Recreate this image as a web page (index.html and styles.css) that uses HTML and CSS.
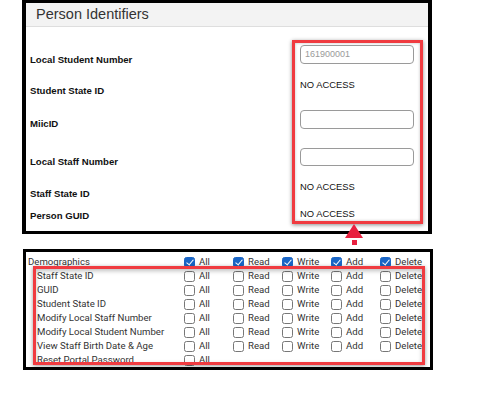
FILE: index.html
```html
<!DOCTYPE html>
<html lang="en">
<head>
<meta charset="utf-8">
<title>Person Identifiers</title>
<link rel="stylesheet" href="styles.css">
</head>
<body>
<div class="page">
  <section class="panel panel-top">
    <div class="panel-head">Person Identifiers</div>
    <div class="panel-body">
      <div class="labels">
        <div class="label g1">Local Student Number</div>
        <div class="label g2">Student State ID</div>
        <div class="label g3">MiicID</div>
        <div class="label g4">Local Staff Number</div>
        <div class="label g5">Staff State ID</div>
        <div class="label g6">Person GUID</div>
      </div>
      <div class="values">
        <div class="field v1"><span class="field-text">161900001</span></div>
        <div class="na v2">NO ACCESS</div>
        <div class="field v3"></div>
        <div class="field v4"></div>
        <div class="na v5">NO ACCESS</div>
        <div class="na v6">NO ACCESS</div>
      </div>
    </div>
  </section>

  <svg class="arrow" width="20" height="24" viewBox="0 0 20 24" aria-hidden="true">
    <polygon points="9,0 18,14 0,14" fill="#e8203f"/>
    <rect x="7" y="16" width="5" height="5" fill="#e8203f"/>
  </svg>

  <section class="panel panel-bottom">
    <div class="row row-head">
      <span class="name">Demographics</span>
      <label class="opt"><span class="cb on"></span>All</label>
      <label class="opt"><span class="cb on"></span>Read</label>
      <label class="opt"><span class="cb on"></span>Write</label>
      <label class="opt"><span class="cb on"></span>Add</label>
      <label class="opt"><span class="cb on"></span>Delete</label>
    </div>
    <div class="row sub">
      <span class="name">Staff State ID</span>
      <label class="opt"><span class="cb"></span>All</label>
      <label class="opt"><span class="cb"></span>Read</label>
      <label class="opt"><span class="cb"></span>Write</label>
      <label class="opt"><span class="cb"></span>Add</label>
      <label class="opt"><span class="cb"></span>Delete</label>
    </div>
    <div class="row sub">
      <span class="name">GUID</span>
      <label class="opt"><span class="cb"></span>All</label>
      <label class="opt"><span class="cb"></span>Read</label>
      <label class="opt"><span class="cb"></span>Write</label>
      <label class="opt"><span class="cb"></span>Add</label>
      <label class="opt"><span class="cb"></span>Delete</label>
    </div>
    <div class="row sub">
      <span class="name">Student State ID</span>
      <label class="opt"><span class="cb"></span>All</label>
      <label class="opt"><span class="cb"></span>Read</label>
      <label class="opt"><span class="cb"></span>Write</label>
      <label class="opt"><span class="cb"></span>Add</label>
      <label class="opt"><span class="cb"></span>Delete</label>
    </div>
    <div class="row sub">
      <span class="name">Modify Local Staff Number</span>
      <label class="opt"><span class="cb"></span>All</label>
      <label class="opt"><span class="cb"></span>Read</label>
      <label class="opt"><span class="cb"></span>Write</label>
      <label class="opt"><span class="cb"></span>Add</label>
      <label class="opt"><span class="cb"></span>Delete</label>
    </div>
    <div class="row sub">
      <span class="name">Modify Local Student Number</span>
      <label class="opt"><span class="cb"></span>All</label>
      <label class="opt"><span class="cb"></span>Read</label>
      <label class="opt"><span class="cb"></span>Write</label>
      <label class="opt"><span class="cb"></span>Add</label>
      <label class="opt"><span class="cb"></span>Delete</label>
    </div>
    <div class="row sub">
      <span class="name">View Staff Birth Date &amp; Age</span>
      <label class="opt"><span class="cb"></span>All</label>
      <label class="opt"><span class="cb"></span>Read</label>
      <label class="opt"><span class="cb"></span>Write</label>
      <label class="opt"><span class="cb"></span>Add</label>
      <label class="opt"><span class="cb"></span>Delete</label>
    </div>
    <div class="row sub">
      <span class="name">Reset Portal Password</span>
      <label class="opt"><span class="cb"></span>All</label>
    </div>
    <div class="highlight"></div>
  </section>
</div>
</body>
</html>
```

FILE: styles.css
```css
* { box-sizing: border-box; }

html, body {
  margin: 0;
  padding: 0;
  background: #fff;
}

.page {
  position: relative;
  width: 481px;
  height: 401px;
  overflow: hidden;
}

.panel {
  border: solid #000;
  background: #fff;
}

/* ---------- top panel ---------- */
.panel-top {
  margin-left: 22px;
  width: 410px;
  height: 234px;
  border-width: 3px 4px 3px 4px;
  display: flex;
  flex-direction: column;
}

.panel-head {
  height: 24px;
  background: #f3f3f3;
  border-bottom: 1px solid #dedede;
  padding-left: 10px;
  font-family: "Liberation Sans", Arial, sans-serif;
  font-size: 14.5px;
  line-height: 23px;
  color: #333;
}

.panel-body {
  flex: 1;
  display: flex;
  align-items: flex-start;
}

.labels {
  flex: 1;
  padding-left: 4px;
  padding-top: 26px;
  display: flex;
  flex-direction: column;
}

.label {
  font-family: "Liberation Sans", Arial, sans-serif;
  font-weight: bold;
  font-size: 9.6px;
  line-height: 14px;
  color: #111;
}
.g2 { margin-top: 17px; }
.g3 { margin-top: 19px; }
.g4 { margin-top: 24px; }
.g5 { margin-top: 18px; }
.g6 { margin-top: 8px; }

.values {
  width: 131px;
  height: 184px;
  margin-top: 13px;
  margin-right: 5px;
  border: 3px solid #f03b40;
  padding-left: 5px;
  display: flex;
  flex-direction: column;
  box-shadow: 0 1px 4px rgba(0,0,0,0.45), inset 0 0 3px rgba(0,0,0,0.25);
}

.field {
  width: 114px;
  height: 19px;
  border: 1px solid #9a9a9a;
  border-radius: 4px;
  background: #fff;
  padding-left: 4px;
  font-family: "Liberation Sans", Arial, sans-serif;
  font-size: 9px;
  line-height: 17px;
  color: #9a9a9a;
}

.na {
  font-family: "Liberation Sans", Arial, sans-serif;
  font-size: 9.4px;
  line-height: 14px;
  color: #111;
}

.v1 { margin-top: 2px; }
.v2 { margin-top: 14px; }
.v3 { margin-top: 18px; }
.v4 { margin-top: 19px; }
.v5 { margin-top: 14px; }
.v6 { margin-top: 13px; }

/* ---------- arrow annotation ---------- */
.arrow {
  position: absolute;
  left: 345px;
  top: 224px;
}

/* ---------- bottom panel ---------- */
.panel-bottom {
  position: relative;
  margin-top: 15px;
  margin-left: 23px;
  width: 410px;
  height: 121px;
  border-width: 3px;
  padding: 3px 0 0 2px;
  overflow: hidden;
}

.row {
  display: grid;
  grid-template-columns: 156px repeat(5, 49px);
  height: 14px;
  align-items: center;
  font-family: Roboto, "Liberation Sans", Arial, sans-serif;
  font-size: 9.6px;
  line-height: 14px;
  color: #333;
}

.row.sub .name {
  padding-left: 9px;
}

.name {
  white-space: nowrap;
}

.opt {
  display: flex;
  align-items: center;
  gap: 4px;
  white-space: nowrap;
}

.cb {
  position: relative;
  flex: none;
  width: 11px;
  height: 11px;
  border: 1px solid #777;
  border-radius: 2.5px;
  background: #fff;
}

.cb.on {
  background: #1a66c7;
  border-color: #1a66c7;
}

.cb.on::after {
  content: "";
  position: absolute;
  left: 3px;
  top: 0.5px;
  width: 3px;
  height: 6px;
  border: solid #fff;
  border-width: 0 1.6px 1.6px 0;
  transform: rotate(40deg);
}

.highlight {
  position: absolute;
  left: 7px;
  top: 14px;
  width: 392px;
  height: 99px;
  border: 3px solid #f03b40;
  box-shadow: 0 1px 4px rgba(0,0,0,0.4), inset 0 2px 4px rgba(0,0,0,0.25);
}
```
